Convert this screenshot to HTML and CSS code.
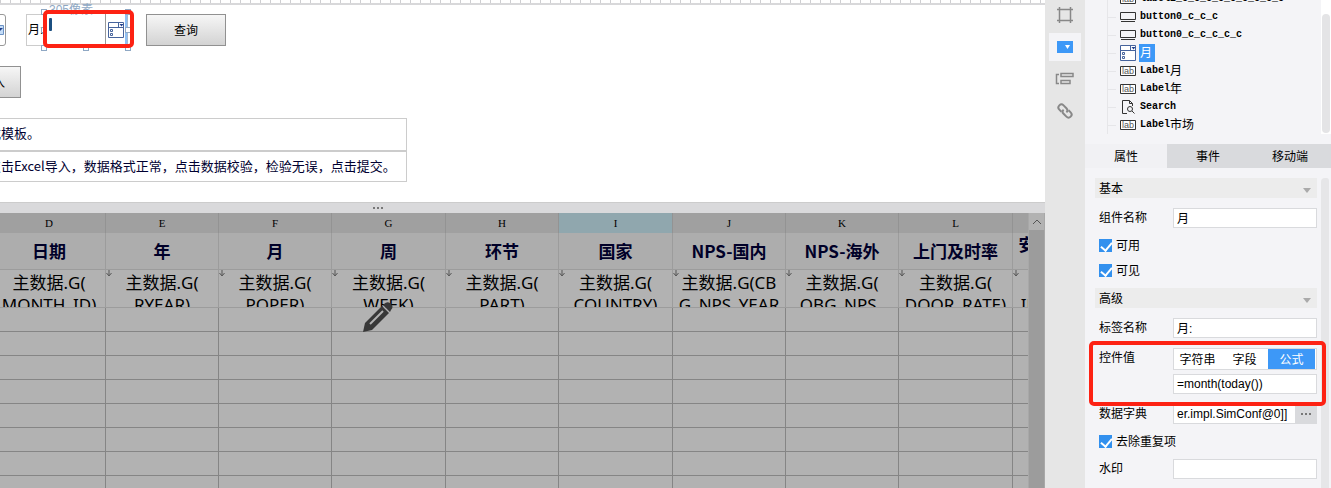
FILE: index.html
```html
<!DOCTYPE html>
<html lang="zh-CN">
	<head>
		<meta charset="UTF-8" />
		<meta name="viewport" content="width=device-width, initial-scale=1.0" />
		<title>报表设计器</title>
		<link rel="stylesheet" href="styles.css">
	</head>
	<body>
		<!-- shared icons -->
		<svg class="defs">
			<symbol id="icon-combo" viewBox="0 0 16 16">
				<path d="M.5.5h15v15H.5zM.5 5.500h15M10.500.5v5" fill="#fff" stroke="#46639c" />
				<path d="M11.500 2h4l-2 2.500z" fill="#22408c" />
				<path d="M2.500 7.500h2v2h-2zM2.500 11.500h2v2h-2z" fill="none" stroke="#46639c" />
			</symbol>
			<symbol id="icon-button" viewBox="0 0 16 12">
				<path d="M.5 1.500h15v7H.5zM1 10.500h14" fill="none" stroke="#333" />
			</symbol>
			<symbol id="icon-label" viewBox="0 0 16 12">
				<path d="M.5 1.500h15v9H.5z" fill="#fff" stroke="#333" />
				<text x="2" y="9" font-size="9" font-family="Liberation Sans" fill="#555">lab</text>
			</symbol>
			<symbol id="icon-search" viewBox="0 0 16 16">
				<path d="M7 14.500H2.500v-13h7l3 3V7M9.500 1.500v3h3" fill="none" stroke="#333" />
				<circle cx="10" cy="10" r="2.500" fill="none" stroke="#333" />
				<path d="M12 12l2.500 2.500" stroke="#333" />
			</symbol>
			<symbol id="icon-mark" viewBox="0 0 6 7">
				<path d="M3 0v5M.5 3L3 6l2.500-3" fill="none" stroke="#555" />
			</symbol>
		</svg>

		<main class="workspace">
			<div class="ruler"></div>
			<section class="canvas">
				<div class="query-row">
					<div class="year-box">
						<select aria-label="年"><option></option></select>
						<svg width="4" height="10"><path d="M0 .5h3.500v9H0" fill="#c3dcf7" stroke="#6d93c4" /><path d="M0 3h3l-3 3z" fill="#22408c" /></svg>
					</div>
					<label class="month-label" for="month">月:</label>
					<div class="month-widget">
						<span class="size-tip">305像素</span>
						<input id="month" type="text" />
						<span class="caret"></span>
						<button class="drop" aria-label="下拉"><svg width="16" height="16"><use href="#icon-combo" /></svg></button>
						<i class="handle top left"></i>
						<i class="handle top right"></i>
						<i class="handle middle left"></i>
						<i class="handle middle right"></i>
						<i class="handle bottom left"></i>
						<i class="handle bottom center"></i>
						<i class="handle bottom right"></i>
						<span class="highlight"></span>
					</div>
					<button class="form-btn">查询</button>
				</div>
				<div class="import-row">
					<button class="form-btn">数据导入</button>
				</div>
				<div class="notes">
					<p>载模板。</p>
					<p>点击Excel导入，数据格式正常，点击数据校验，检验无误，点击提交。</p>
				</div>
			</section>

			<div class="splitter"><i></i><i></i><i></i></div>

			<section class="sheet">
				<div class="sheet-view">
					<table>
						<colgroup>
							<col class="narrow" /><col class="narrow" /><col class="narrow" /><col class="wide" /><col class="narrow" />
							<col class="wide" /><col class="narrow" /><col class="narrow" /><col class="wide" /><col class="wide" />
						</colgroup>
						<thead>
							<tr>
								<th>D</th><th>E</th><th>F</th><th>G</th><th>H</th>
								<th class="current">I</th><th>J</th><th>K</th><th>L</th><th>M</th>
							</tr>
						</thead>
						<tbody>
							<tr class="titles">
								<td>日期</td><td>年</td><td>月</td><td>周</td><td>环节</td>
								<td>国家</td><td>NPS-国内</td><td>NPS-海外</td><td>上门及时率</td><td><div>安装及时率达成</div></td>
							</tr>
							<tr class="fields">
								<td><div>主数据.G(<br>MONTH_ID)</div></td>
								<td><svg width="6" height="7"><use href="#icon-mark" /></svg><div>主数据.G(<br>RYEAR)</div></td>
								<td><svg width="6" height="7"><use href="#icon-mark" /></svg><div>主数据.G(<br>POPER)</div></td>
								<td><svg width="6" height="7"><use href="#icon-mark" /></svg><div>主数据.G(<br>WEEK)</div></td>
								<td><svg width="6" height="7"><use href="#icon-mark" /></svg><div>主数据.G(<br>PART)</div></td>
								<td><svg width="6" height="7"><use href="#icon-mark" /></svg><div>主数据.G(<br>COUNTRY)</div></td>
								<td><svg width="6" height="7"><use href="#icon-mark" /></svg><div>主数据.G(CB<br>G_NPS_YEAR</div></td>
								<td><svg width="6" height="7"><use href="#icon-mark" /></svg><div>主数据.G(<br>OBG_NPS_</div></td>
								<td><svg width="6" height="7"><use href="#icon-mark" /></svg><div>主数据.G(<br>DOOR_RATE)</div></td>
								<td><svg width="6" height="7"><use href="#icon-mark" /></svg><div>主数据.G(<br>INSTALL_RT)</div></td>
							</tr>
							<tr><td></td><td></td><td></td><td></td><td></td><td></td><td></td><td></td><td></td><td></td></tr>
							<tr><td></td><td></td><td></td><td></td><td></td><td></td><td></td><td></td><td></td><td></td></tr>
							<tr><td></td><td></td><td></td><td></td><td></td><td></td><td></td><td></td><td></td><td></td></tr>
							<tr><td></td><td></td><td></td><td></td><td></td><td></td><td></td><td></td><td></td><td></td></tr>
							<tr><td></td><td></td><td></td><td></td><td></td><td></td><td></td><td></td><td></td><td></td></tr>
							<tr><td></td><td></td><td></td><td></td><td></td><td></td><td></td><td></td><td></td><td></td></tr>
							<tr><td></td><td></td><td></td><td></td><td></td><td></td><td></td><td></td><td></td><td></td></tr>
							<tr><td></td><td></td><td></td><td></td><td></td><td></td><td></td><td></td><td></td><td></td></tr>
						</tbody>
					</table>
				</div>
				<div class="sheet-scroll">
					<button aria-label="向上"><svg width="10" height="6"><path d="M1 5l4-4 4 4" fill="none" stroke="#555" /></svg></button>
				</div>
				<svg class="pencil" width="32" height="32" viewBox="0 0 32 32">
					<path d="M1 31l2-9L20 5l7 7L10 29z" fill="#383838" />
					<path d="M22 3q3-3 6-1l1 1q3 3 0 6l-1 2-7-7z" fill="#383838" />
					<path d="M8 23L21 10" stroke="#b2b2b2" stroke-width="2" />
					<path d="M20.500 4.500l7 7" stroke="#b2b2b2" />
				</svg>
			</section>
		</main>

		<nav class="rail">
			<button aria-label="单元格"><svg width="18" height="18"><path d="M3.500 1v16M14.500 1v16M1 3.500h16M1 14.500h16" fill="none" stroke="#888" stroke-width="1.500" /></svg></button>
			<button class="active" aria-label="控件"><svg width="16" height="12"><path d="M0 0h16v12H0z" fill="#3d98f7" /><path d="M8 4h5l-2.500 4z" fill="#fff" /></svg></button>
			<button aria-label="条件"><svg width="20" height="16"><path d="M4 3.500H1.500v9H4M6 2.500h12v3H6zM6 9.500h9v3H6z" fill="none" stroke="#888" stroke-width="1.500" /></svg></button>
			<button aria-label="超链接"><svg width="18" height="18" viewBox="0 0 18 18"><g transform="rotate(45 9 9)" fill="none" stroke="#888" stroke-width="2"><path d="M7 12H4a3 3 0 010-6h4a3 3 0 013 3" /><path d="M11 6h3a3 3 0 010 6h-4a3 3 0 01-3-3" /></g></svg></button>
		</nav>

		<aside class="panel">
			<div class="tree-wrap">
				<ul class="tree">
					<li><svg width="16" height="12"><use href="#icon-label" /></svg><span>label2_c_c_c_c_c_c_c_c_c</span></li>
					<li><svg width="16" height="12"><use href="#icon-button" /></svg><span>button0_c_c_c</span></li>
					<li><svg width="16" height="12"><use href="#icon-button" /></svg><span>button0_c_c_c_c_c</span></li>
					<li class="selected"><svg width="16" height="16"><use href="#icon-combo" /></svg><b>月</b></li>
					<li><svg width="16" height="12"><use href="#icon-label" /></svg><span>Label</span>月</li>
					<li><svg width="16" height="12"><use href="#icon-label" /></svg><span>Label</span>年</li>
					<li><svg width="16" height="16"><use href="#icon-search" /></svg><span>Search</span></li>
					<li><svg width="16" height="12"><use href="#icon-label" /></svg><span>Label</span>市场</li>
				</ul>
				<div class="tree-scroll"></div>
			</div>

			<div class="tabs">
				<button class="active">属性</button>
				<button>事件</button>
				<button>移动端</button>
			</div>

			<div class="props-wrap">
				<form class="props">
					<h4>基本</h4>
					<div class="field">
						<label for="name">组件名称</label>
						<input id="name" type="text" value="月" />
					</div>
					<label class="check"><input type="checkbox" checked />可用</label>
					<label class="check"><input type="checkbox" checked />可见</label>
					<h4>高级</h4>
					<div class="field">
						<label for="label-name">标签名称</label>
						<input id="label-name" type="text" value="月:" />
					</div>
					<div class="field value-field">
						<label for="value">控件值</label>
						<div class="value-box">
							<div class="segments">
								<button type="button">字符串</button>
								<button type="button">字段</button>
								<button type="button" class="active">公式</button>
							</div>
							<input id="value" type="text" value="=month(today())" />
						</div>
						<span class="highlight"></span>
					</div>
					<div class="field">
						<label for="dict">数据字典</label>
						<div class="dict">
							<input id="dict" type="text" value="er.impl.SimConf@0]]" />
							<button type="button" aria-label="更多"><i></i><i></i><i></i></button>
						</div>
					</div>
					<label class="check"><input type="checkbox" checked />去除重复项</label>
					<div class="field">
						<label for="watermark">水印</label>
						<input id="watermark" type="text" />
					</div>
				</form>
				<div class="props-scroll"></div>
			</div>
		</aside>
	</body>
</html>
```
FILE: styles.css
```css
* {
	box-sizing: border-box;
	margin: 0;
	padding: 0;
}

body {
	display: flex;
	height: 100vh;
	overflow: hidden;
	background: #fff;
	color: #000;
	font-family: "Liberation Sans", "Noto Sans CJK SC", sans-serif;
	font-size: 12px;
}

button,
input,
select {
	font: inherit;
	color: inherit;
	border: none;
	background: none;
}

svg {
	display: block;
	flex: none;
}

.defs {
	position: absolute;
	width: 0;
	height: 0;
}

/* designer area */
.workspace {
	flex: 1;
	min-width: 0;
	display: flex;
	flex-direction: column;
}

.ruler {
	height: 5px;
	border-bottom: 2px solid #d8d8da;
	background: repeating-linear-gradient(to right, #cfcfd2 0 1px, #fff 1px 10px);
}

.canvas {
	height: 197px;
	padding-top: 9px;
}

.query-row {
	display: flex;
	height: 32px;
}

.year-box {
	position: relative;
	width: 6px;
	margin-right: 20px;
	display: flex;
	justify-content: flex-end;
	align-items: center;
	overflow: hidden;
}

.year-box select {
	flex: none;
	width: 80px;
	height: 32px;
	appearance: none;
	border: 1px solid #999;
	border-radius: 3px;
}

.year-box svg {
	position: absolute;
	left: 0;
}

.month-label {
	width: 18px;
	padding-left: 1px;
	border: 1px solid #ccc;
	border-right: none;
	line-height: 30px;
	white-space: nowrap;
}

.month-widget {
	position: relative;
	display: flex;
	width: 84px;
	margin-right: 18px;
	border: 1px solid #a5bbd3;
	border-top: none;
}

.month-widget input {
	width: 60px;
	background: #fff;
}

.size-tip {
	position: absolute;
	left: 4px;
	top: -11px;
	color: #8fa8c4;
	line-height: 14px;
	white-space: nowrap;
}

.caret {
	position: absolute;
	left: 4px;
	top: 4px;
	width: 3px;
	height: 13px;
	border-radius: 1px;
	background: #1b4f80;
}

.drop {
	width: 23px;
	display: flex;
	justify-content: center;
	align-items: center;
	border-left: 1px solid #999;
	border-right: 2px solid #8fc0f5;
}

.handle {
	position: absolute;
	width: 6px;
	height: 6px;
	border: 1px solid #8fa8c4;
	background: #fff;
}

.handle.top {
	top: -5px;
}

.handle.middle {
	top: 13px;
}

.handle.bottom {
	bottom: -6px;
}

.handle.left {
	left: -4px;
}

.handle.center {
	left: 38px;
}

.handle.right {
	right: -4px;
}

.highlight {
	position: absolute;
	border: 4px solid #fd2213;
	border-radius: 5px;
	pointer-events: none;
}

.month-widget .highlight {
	inset: -4px -7px -3px -2px;
}

.form-btn {
	width: 80px;
	height: 32px;
	padding-bottom: 1px;
	border: 1px solid #919191;
	background: linear-gradient(#f6f6f6, #d3d3d3);
}

.import-row {
	margin: 20px 0 20px -59px;
}

.notes {
	width: 407px;
	border: 1px solid #ccc;
	border-left: none;
}

.notes p {
	height: 31px;
	color: #000030;
	font-family: "Noto Sans CJK SC", sans-serif;
	font-size: 13px;
	line-height: 28px;
	text-indent: -12px;
	white-space: nowrap;
}

.notes p + p {
	border-top: 2px solid #ccc;
}

.splitter {
	height: 11px;
	display: flex;
	align-items: center;
	gap: 2px;
	padding-left: 373px;
	border-top: 1px solid #ccc;
	background: #d9d9db;
}

.splitter i,
.dict i {
	width: 2px;
	height: 2px;
	background: #777;
}

/* spreadsheet */
.sheet {
	position: relative;
	flex: 1;
	min-height: 0;
	display: flex;
	background: #b2b2b2;
}

.sheet-view {
	flex: 1;
	min-width: 0;
	overflow: hidden;
}

.sheet table {
	width: 1134px;
	margin-left: -7px;
	table-layout: fixed;
	border-spacing: 0;
}

.narrow {
	width: 113px;
}

.wide {
	width: 114px;
}

.sheet th {
	height: 20px;
	border-right: 1px solid #939393;
	background: #a0a0a0;
	font-family: "Liberation Serif", serif;
	font-size: 11px;
	font-weight: normal;
	line-height: 20px;
}

.sheet .current {
	background: #90a7ae;
}

.sheet td {
	position: relative;
	height: 24px;
	border-right: 1px solid #858585;
	border-bottom: 1px solid #858585;
	text-align: center;
	font-family: "Noto Sans CJK SC", sans-serif;
	font-size: 17px;
	line-height: 22px;
}

.sheet td div {
	height: 37px;
	overflow: hidden;
}

.sheet td svg {
	position: absolute;
	left: 0;
	top: 0;
}

.sheet .titles td {
	height: 37px;
	border-color: #9c9c9c;
	background: #adadad;
	color: #000028;
	font-weight: bold;
}

.sheet .titles div {
	height: 36px;
}

.sheet .fields td {
	height: 38px;
	border-color: #9c9c9c;
	font-family: "Noto Sans", "Noto Sans CJK SC", sans-serif;
}

.sheet .fields div {
	padding-top: 2px;
}

.sheet-scroll {
	width: 17px;
	border-left: 1px solid #a8a8a8;
	border-right: 1px solid #a8a8a8;
	background: #9c9c9c;
}

.sheet-scroll button {
	width: 100%;
	height: 17px;
	display: flex;
	justify-content: center;
	align-items: center;
	background: #b2b2b2;
}

.pencil {
	position: absolute;
	left: 362px;
	top: 88px;
}

/* icon rail */
.rail {
	width: 40px;
	display: flex;
	flex-direction: column;
	gap: 4px;
	padding: 1px 4px;
	background: #e6e6e6;
}

.rail button {
	height: 28px;
	display: flex;
	justify-content: center;
	align-items: center;
}

.rail .active {
	background: #f4f4f7;
}

/* right panel */
.panel {
	width: 246px;
	display: flex;
	flex-direction: column;
	background: #f4f4f7;
}

.tree-wrap {
	height: 134px;
	display: flex;
	margin-bottom: 10px;
}

.tree {
	flex: 1;
	display: flex;
	flex-direction: column;
	justify-content: flex-end;
	padding-left: 22px;
	overflow: hidden;
	list-style: none;
}

.tree li {
	flex: none;
	height: 18px;
	display: flex;
	align-items: center;
	border-left: 1px solid #e6e6e9;
	line-height: 18px;
}

.tree li::before {
	content: "";
	width: 8px;
	margin-right: 4px;
	border-top: 1px solid #e6e6e9;
}

.tree svg {
	margin-right: 4px;
}

.tree span {
	font-family: "Liberation Mono", monospace;
	font-size: 10px;
	font-weight: bold;
}

.tree b {
	width: 16px;
	margin-left: -1px;
	padding-left: 1px;
	background: #3d98f7;
	color: #fff;
	font-weight: normal;
}

.tree-scroll {
	width: 10px;
	padding: 14px 1px 1px;
	background: #fff;
}

.tree-scroll::before {
	content: "";
	display: block;
	height: 100%;
	border-radius: 4px;
	background: #e4e4e6;
}

.tabs {
	display: flex;
	height: 24px;
	margin-bottom: 10px;
}

.tabs button {
	flex: 1;
	padding-bottom: 1px;
	background: #d9dadd;
}

.tabs .active {
	background: #f1f1f4;
}

.props-wrap {
	flex: 1;
	min-height: 0;
	display: flex;
	overflow: hidden;
}

.props {
	flex: 1;
	min-width: 0;
	padding: 0 4px 0 10px;
}

.props h4 {
	height: 20px;
	display: flex;
	justify-content: space-between;
	align-items: center;
	margin-bottom: 10px;
	padding: 0 6px 2px 4px;
	background: #ececec;
	font-weight: normal;
}

.props h4::after {
	content: "";
	margin-top: 6px;
	border: 4px solid transparent;
	border-top: 5px solid #aaa;
	border-bottom: none;
}

.field {
	display: flex;
	margin-bottom: 10px;
}

.field > label {
	width: 78px;
	padding-left: 4px;
	line-height: 20px;
}

.field > input,
.value-box,
.dict {
	flex: 1;
	min-width: 0;
}

.field input {
	width: 100%;
	height: 20px;
	padding: 0 3px 1px;
	border: 1px solid #d9dadd;
	background: #fff;
}

.check {
	display: flex;
	align-items: center;
	height: 15px;
	line-height: 14px;
	margin-bottom: 10px;
	padding-left: 4px;
}

.check input {
	appearance: none;
	width: 13px;
	height: 13px;
	margin-right: 4px;
	background: #3290ee;
}

.check input::before {
	content: "";
	display: block;
	width: 5px;
	height: 9px;
	margin: 1px 0 0 4px;
	border: solid #fff;
	border-width: 0 2px 2px 0;
	transform: rotate(40deg);
}

.value-field {
	position: relative;
}

.value-field .highlight {
	inset: -7px -9px -12px -6px;
}

.segments {
	display: flex;
	height: 22px;
	margin-bottom: 4px;
	padding-right: 1px;
	border: 1px solid #d9dadd;
	background: #fff;
}

.segments button {
	flex: 1;
	padding-bottom: 1px;
}

.segments .active {
	background: #3d98f7;
	color: #fff;
}

.dict {
	display: flex;
}

.dict input {
	flex: 1;
	min-width: 0;
	border-right: none;
}

.dict button {
	width: 22px;
	display: flex;
	justify-content: center;
	align-items: center;
	gap: 2px;
	background: #d9dadd;
}

.props-scroll {
	width: 10px;
	border-right: 2px solid #f4f4f7;
	border-radius: 4px 4px 0 0;
	background: #e6e6e8;
}
```
